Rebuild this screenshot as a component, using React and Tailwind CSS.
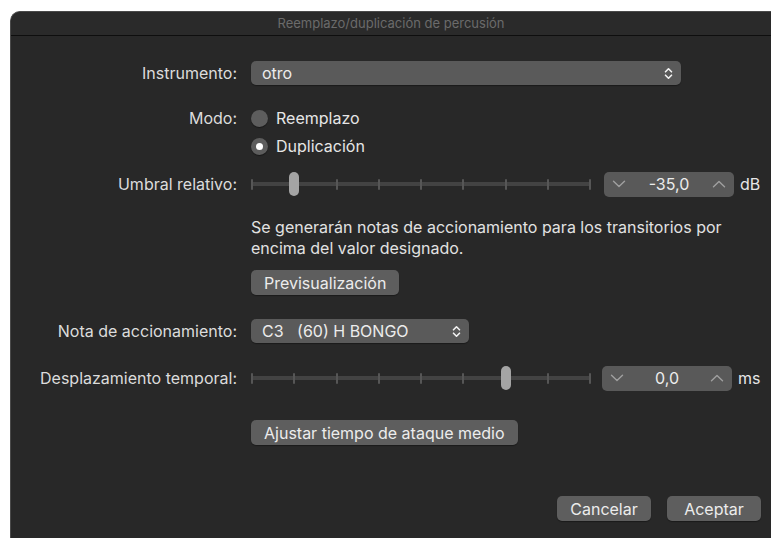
import React from "react";

const font = { fontFamily: "Inter, 'Noto Sans', sans-serif" };

function UpDown() {
  return (
    <svg width="9" height="13" viewBox="0 0 9 13" fill="none" stroke="#f2f2f2" strokeWidth="1.6" strokeLinecap="round" strokeLinejoin="round">
      <path d="M1.5 4.8 L4.5 1.8 L7.5 4.8" />
      <path d="M1.5 8.2 L4.5 11.2 L7.5 8.2" />
    </svg>
  );
}

function Chevron({ up }) {
  return (
    <svg width="14" height="8" viewBox="0 0 14 8" fill="none" stroke="#a0a0a0" strokeWidth="1.4" strokeLinecap="round" strokeLinejoin="round">
      {up ? <path d="M1.5 6.7 L7 1.5 L12.5 6.7" /> : <path d="M1.5 1.3 L7 6.5 L12.5 1.3" />}
    </svg>
  );
}

function Slider({ thumb }) {
  const ticks = Array.from({ length: 9 });
  const left = thumb * 42.25 + 1 - 5;
  return (
    <div className="relative w-[340px] h-[26px] flex items-center">
      <div className="absolute left-0 right-0 top-[11px] h-[4px] rounded-full bg-[#434343]" />
      <div className="relative w-full flex justify-between items-center">
        {ticks.map((_, i) => (
          <div key={i} className="w-[2px] h-[11px] rounded-[1px] bg-[#565656]" />
        ))}
      </div>
      <div
        className="absolute top-[1px] w-[10px] h-[24px] rounded-full bg-[#a4a4a4]"
        style={{ left }}
      />
    </div>
  );
}

function Stepper({ value, unit }) {
  return (
    <div className="flex items-center">
      <div className="w-[130px] h-[25px] rounded-[5px] bg-[#595959] flex items-center justify-between px-[8px] text-[16px] text-[#ececec]">
        <Chevron />
        <span>{value}</span>
        <Chevron up />
      </div>
      <span className="ml-[6px] text-[16px] text-[#e6e6e6]">{unit}</span>
    </div>
  );
}

function Row({ label, className = "", children }) {
  return (
    <div className={"flex items-center " + className}>
      <div className="w-[226px] text-right text-[16px] text-[#dcdcdc] whitespace-nowrap">{label}</div>
      <div className="ml-[14px] flex items-center">{children}</div>
    </div>
  );
}

function Button({ children, className = "" }) {
  return (
    <div
      className={
        "h-[25px] rounded-[5px] bg-[#5e5e5e] flex items-center justify-center text-[16px] text-[#ececec] shadow-[0_1px_1px_rgba(0,0,0,0.35)] " +
        className
      }
    >
      {children}
    </div>
  );
}

function Radio({ on, label }) {
  return (
    <div className="h-[28px] flex items-center">
      <div className="w-[17px] h-[17px] rounded-full bg-[#5d5d5d] flex items-center justify-center shadow-[0_1px_1px_rgba(0,0,0,0.4)]">
        {on && <div className="w-[7px] h-[7px] rounded-full bg-white" />}
      </div>
      <span className="ml-[8px] text-[16px] text-[#e6e6e6]">{label}</span>
    </div>
  );
}

export default function App() {
  return (
    <div className="w-[771px] h-[538px] bg-white overflow-hidden" style={font}>
      <div className="ml-[10px] mt-[11px] h-[527px] bg-[#282828] rounded-tl-[10px] border-l border-t border-[#4a4a4a] flex flex-col">
        <div className="h-[24px] shrink-0 border-b border-[#0e0e0e] bg-[#2a2a2a] rounded-tl-[10px] flex items-center justify-center text-[13px] text-[#6b6b6b]">
          Reemplazo/duplicación de percusión
        </div>

        <Row label="Instrumento:" className="mt-[25px]">
          <div className="w-[430px] h-[24px] rounded-[5px] bg-[#5a5a5a] flex items-center justify-between pl-[11px] pr-[8px] text-[16px] text-[#ececec] shadow-[0_1px_1px_rgba(0,0,0,0.35)]">
            <span>otro</span>
            <UpDown />
          </div>
        </Row>

        <div className="mt-[19px] flex">
          <div className="w-[226px] h-[28px] flex items-center justify-end text-[16px] text-[#dcdcdc]">Modo:</div>
          <div className="ml-[14px] flex flex-col">
            <Radio label="Reemplazo" />
            <Radio on label="Duplicación" />
          </div>
        </div>

        <Row label="Umbral relativo:" className="mt-[11px]">
          <Slider thumb={1} />
          <div className="ml-[13px]">
            <Stepper value="-35,0" unit="dB" />
          </div>
        </Row>

        <div className="mt-[20px] ml-[240px] w-[500px] text-[16px] leading-[21px] text-[#e2e2e2]">
          Se generarán notas de accionamiento para los transitorios por encima del valor designado.
        </div>

        <div className="mt-[11px] ml-[240px] flex">
          <Button className="px-[13px]">Previsualización</Button>
        </div>

        <Row label="Nota de accionamiento:" className="mt-[24px]">
          <div className="w-[218px] h-[24px] rounded-[5px] bg-[#5a5a5a] flex items-center justify-between pl-[11px] pr-[8px] text-[16px] text-[#ececec] shadow-[0_1px_1px_rgba(0,0,0,0.35)]">
            <span className="whitespace-pre">C3   (60) H BONGO</span>
            <UpDown />
          </div>
        </Row>

        <Row label="Desplazamiento temporal:" className="mt-[22px]">
          <Slider thumb={6} />
          <div className="ml-[11px]">
            <Stepper value="0,0" unit="ms" />
          </div>
        </Row>

        <div className="mt-[29px] ml-[240px] flex">
          <Button className="px-[13px]">Ajustar tiempo de ataque medio</Button>
        </div>

        <div className="mt-[51px] flex justify-end gap-[16px] pr-[10px]">
          <Button className="w-[94px]">Cancelar</Button>
          <Button className="w-[94px]">Aceptar</Button>
        </div>
      </div>
    </div>
  );
}
